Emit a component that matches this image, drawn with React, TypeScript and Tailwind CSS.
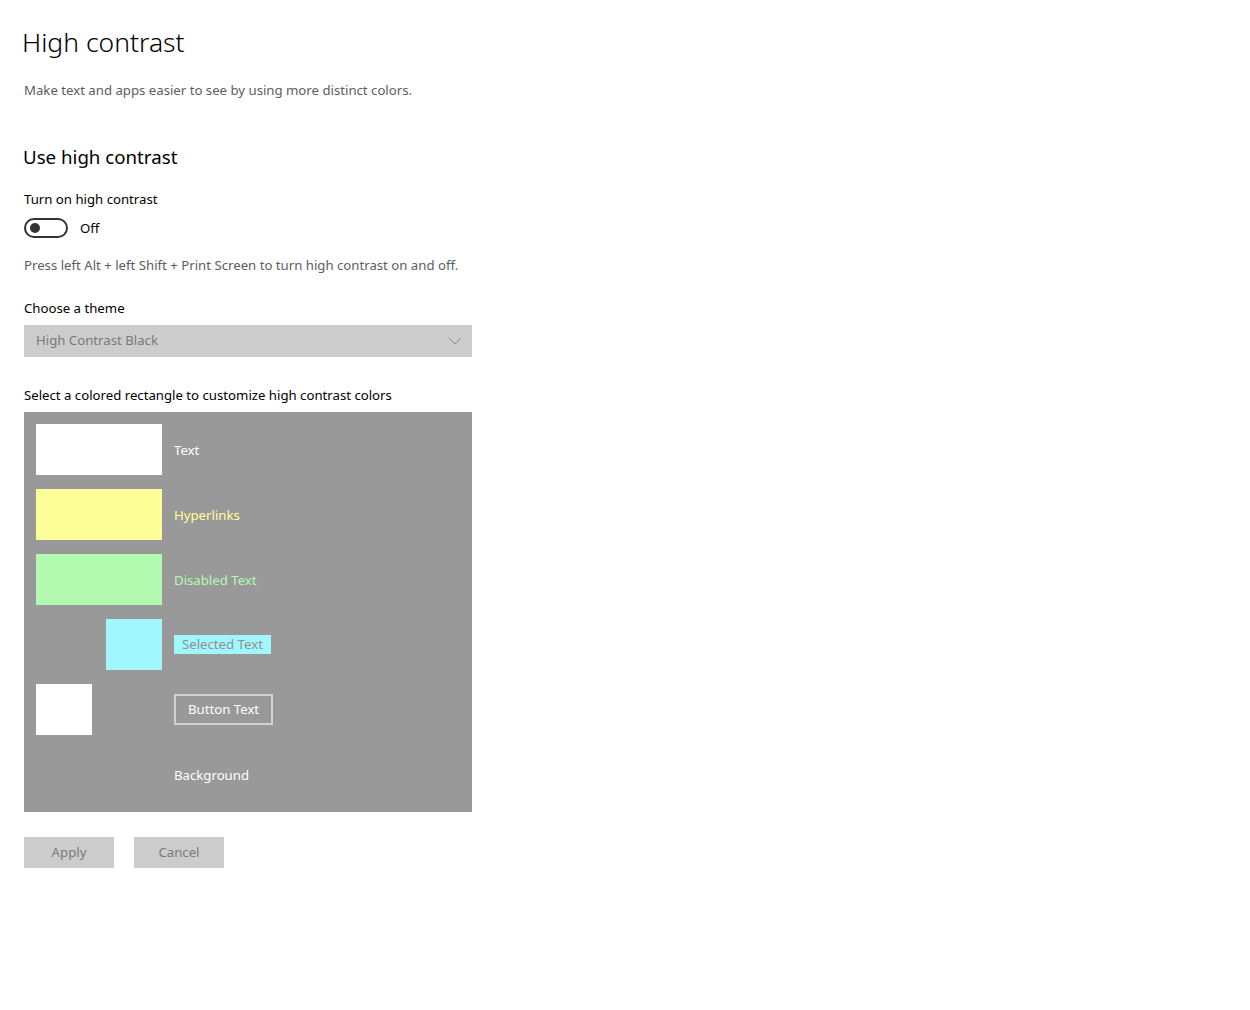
const font = { fontFamily: '"Segoe UI", "Noto Sans", "Open Sans", sans-serif' }

type Row = {
  label: string
  swatch: string | null
  swatchPos: 'full' | 'right' | 'left'
  kind: 'plain' | 'selected' | 'button'
  color: string
}

const rows: Row[] = [
  { label: 'Text', swatch: '#ffffff', swatchPos: 'full', kind: 'plain', color: 'text-white' },
  { label: 'Hyperlinks', swatch: '#ffff99', swatchPos: 'full', kind: 'plain', color: 'text-[#ffff99]' },
  { label: 'Disabled Text', swatch: '#b3f9b0', swatchPos: 'full', kind: 'plain', color: 'text-[#b3f9b0]' },
  { label: 'Selected Text', swatch: '#a1f7fe', swatchPos: 'right', kind: 'selected', color: 'text-[#8f8f8f]' },
  { label: 'Button Text', swatch: '#ffffff', swatchPos: 'left', kind: 'button', color: 'text-white' },
  { label: 'Background', swatch: null, swatchPos: 'full', kind: 'plain', color: 'text-white' },
]

function Swatch({ row }: { row: Row }) {
  if (!row.swatch) return <div className="h-[51px] w-[126px]" />
  if (row.swatchPos === 'right')
    return (
      <div className="flex h-[51px] w-[126px] justify-end">
        <div className="h-full w-[56px]" style={{ background: row.swatch }} />
      </div>
    )
  if (row.swatchPos === 'left')
    return (
      <div className="flex h-[51px] w-[126px]">
        <div className="h-full w-[56px]" style={{ background: row.swatch }} />
      </div>
    )
  return <div className="h-[51px] w-[126px]" style={{ background: row.swatch }} />
}

export default function App() {
  return (
    <div className="min-h-screen bg-white text-[#000]" style={font}>
      <div className="flex flex-col pl-[24px] pt-[24px]">
        <h1 className="-ml-[2px] text-[26.5px] font-light leading-[36px] text-black">High contrast</h1>
        <p className="mt-[20px] text-[13.2px] leading-[20px] text-[#5d5d5d]">
          Make text and apps easier to see by using more distinct colors.
        </p>

        <h2 className="-ml-[1px] mt-[43px] text-[18.7px] leading-[28px] text-black">Use high contrast</h2>
        <p className="mt-[18px] text-[13.2px] leading-[20px]">Turn on high contrast</p>
        <div className="mt-[9px] flex items-center gap-[12px]">
          <div className="flex h-[20px] w-[44px] items-center rounded-full border-2 border-[#333] pl-[4px]">
            <div className="h-[10px] w-[10px] rounded-full bg-[#333]" />
          </div>
          <span className="text-[13.2px] leading-[20px]">Off</span>
        </div>
        <p className="mt-[17px] text-[13.2px] leading-[20px] text-[#5d5d5d]">
          Press left Alt + left Shift + Print Screen to turn high contrast on and off.
        </p>

        <p className="mt-[23px] text-[13.2px] leading-[20px]">Choose a theme</p>
        <div className="mt-[7px] flex h-[32px] w-[448px] items-center justify-between bg-[#cccccc] pl-[12px] pr-[10px]">
          <span className="text-[13.2px] text-[#7a7a7a]">High Contrast Black</span>
          <svg width="14" height="8" viewBox="0 0 14 8" fill="none">
            <path d="M1 1l6 6 6-6" stroke="#8a8a8a" strokeWidth="1" />
          </svg>
        </div>

        <p className="mt-[28px] text-[13.2px] leading-[20px]">
          Select a colored rectangle to customize high contrast colors
        </p>
        <div className="mt-[7px] flex h-[400px] w-[448px] flex-col gap-[14px] bg-[#999999] px-[12px] pt-[12px]">
          {rows.map((row) => (
            <div key={row.label} className="flex h-[51px] items-center gap-[12px]">
              <Swatch row={row} />
              {row.kind === 'selected' ? (
                <span className={`bg-[#a1f7fe] px-[8px] text-[13.2px] leading-[19px] ${row.color}`}>{row.label}</span>
              ) : row.kind === 'button' ? (
                <span className="flex h-[31px] items-center border-2 border-[#d2d2d2] px-[12px] text-[13.2px] text-white">
                  {row.label}
                </span>
              ) : (
                <span className={`text-[13.2px] leading-[20px] ${row.color}`}>{row.label}</span>
              )}
            </div>
          ))}
        </div>

        <div className="mt-[25px] flex gap-[20px]">
          <button className="h-[31px] w-[90px] bg-[#cccccc] text-[13.2px] text-[#7a7a7a]">Apply</button>
          <button className="h-[31px] w-[90px] bg-[#cccccc] text-[13.2px] text-[#7a7a7a]">Cancel</button>
        </div>
      </div>
    </div>
  )
}
